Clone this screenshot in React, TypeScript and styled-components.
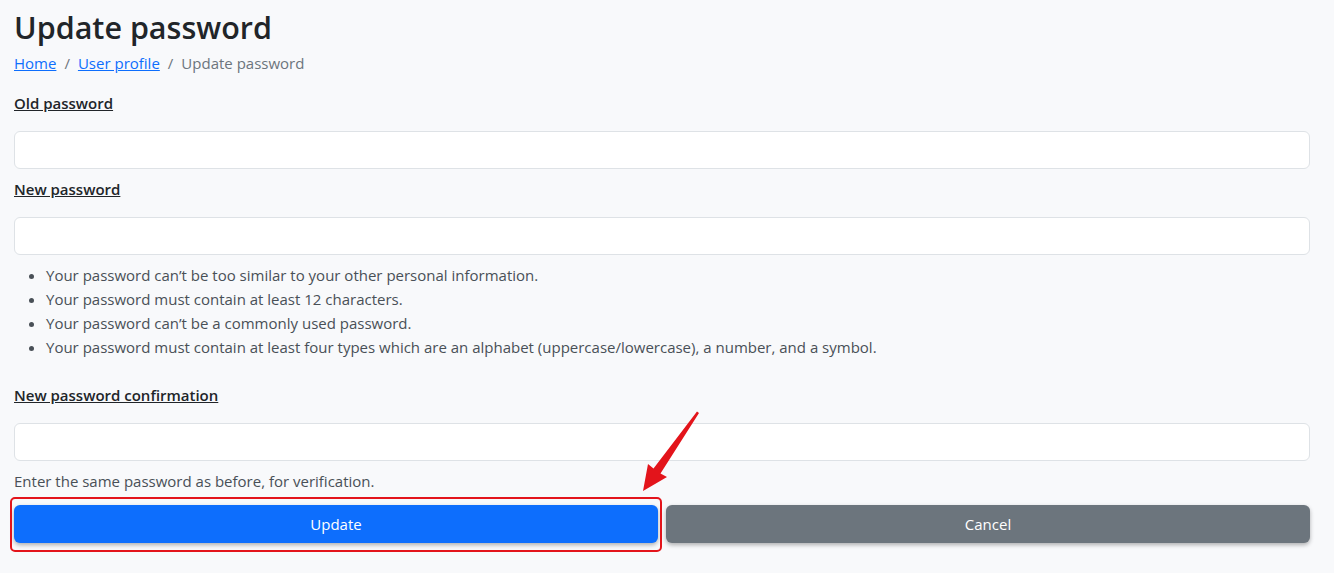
import React from "react";
import styled, { createGlobalStyle } from "styled-components";

const GlobalStyle = createGlobalStyle`
    html, body {
        margin: 0;
        padding: 0;
        background: #f8f9fb;
    }
    body {
        font-family: "Open Sans", "Noto Sans", "Liberation Sans", sans-serif;
        color: #212529;
    }
`;

const Page = styled.div`
    position: relative;
    padding: 3px 24px 20px 14px;
    font-size: 15px;
    line-height: 24px;
`;

const Title = styled.h1`
    margin: 0;
    font-size: 30.5px;
    line-height: 48px;
    font-weight: 600;
    color: #212529;
`;

const Crumbs = styled.nav`
    display: flex;
    align-items: center;
    gap: 8px;
    color: #6c757d;
    margin-bottom: 16px;
`;

const CrumbLink = styled.a`
    color: #0d6efd;
    text-decoration: underline;
`;

const Group = styled.div<{ $after?: number }>`
    display: flex;
    flex-direction: column;
    margin-bottom: ${({ $after }) => $after ?? 8}px;
`;

const Label = styled.label`
    font-weight: 600;
    text-decoration: underline;
    margin-bottom: 16px;
`;

const Input = styled.input`
    box-sizing: border-box;
    height: 38px;
    width: 100%;
    border: 1px solid #dee2e6;
    border-radius: 6px;
    background: #fff;
    padding: 6px 12px;
    font: inherit;
`;

const Rules = styled.ul`
    margin: 8px 0 24px;
    padding-left: 32px;
    color: #495057;
`;

const Hint = styled.div`
    margin-top: 8px;
    color: #495057;
`;

const Actions = styled.div`
    display: grid;
    grid-template-columns: 1fr 1fr;
    gap: 8px;
`;

const Button = styled.button<{ $variant: "primary" | "secondary" }>`
    position: relative;
    height: 38px;
    border: none;
    border-radius: 6px;
    color: #fff;
    font: inherit;
    background: ${({ $variant }) => ($variant === "primary" ? "#0d6efd" : "#6c757d")};
    box-shadow: 0 2px 4px rgba(0, 0, 0, 0.3);
`;

const Highlight = styled.span`
    position: absolute;
    top: -8px;
    bottom: -9px;
    left: -4px;
    right: -4px;
    border: 2px solid #e3141b;
    border-radius: 5px;
    pointer-events: none;
`;

const Arrow = styled.svg`
    position: absolute;
    left: 630px;
    top: 405px;
    width: 80px;
    height: 90px;
    pointer-events: none;
`;

const App: React.FC = () => (
    <>
        <GlobalStyle />
        <Page>
            <Title>Update password</Title>
            <Crumbs>
                <CrumbLink href="#">Home</CrumbLink>
                <span>/</span>
                <CrumbLink href="#">User profile</CrumbLink>
                <span>/</span>
                <span>Update password</span>
            </Crumbs>

            <Group>
                <Label>Old password</Label>
                <Input type="password" />
            </Group>

            <Group $after={0}>
                <Label>New password</Label>
                <Input type="password" />
                <Rules>
                    <li>Your password can’t be too similar to your other personal information.</li>
                    <li>Your password must contain at least 12 characters.</li>
                    <li>Your password can’t be a commonly used password.</li>
                    <li>
                        Your password must contain at least four types which are an alphabet
                        (uppercase/lowercase), a number, and a symbol.
                    </li>
                </Rules>
            </Group>

            <Group $after={12}>
                <Label>New password confirmation</Label>
                <Input type="password" />
                <Hint>Enter the same password as before, for verification.</Hint>
            </Group>

            <Actions>
                <Button $variant="primary">
                    Update
                    <Highlight />
                </Button>
                <Button $variant="secondary">Cancel</Button>
            </Actions>

            {/* annotation arrow */}
            <Arrow viewBox="0 0 80 90">
                <polygon
                    points="13,86 18,59 23.5,63.5 67,6.5 69,8 30.5,68.5 37,72"
                    fill="#e3141b"
                />
            </Arrow>
        </Page>
    </>
);

export default App;
